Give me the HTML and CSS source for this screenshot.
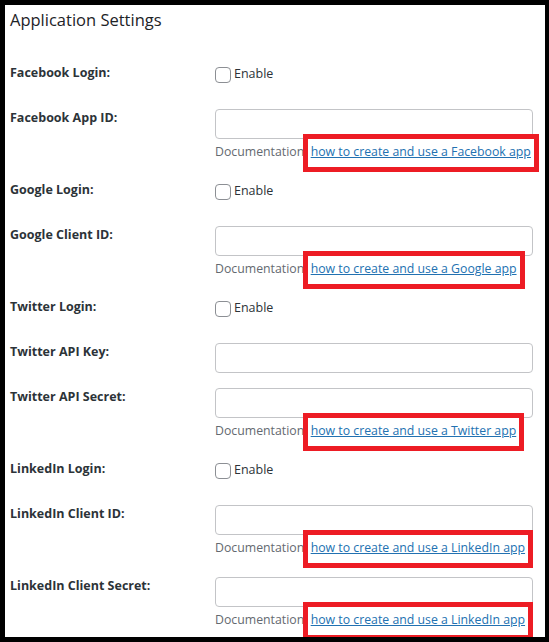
FILE: index.html
```html
<!DOCTYPE html>
<html lang="en">
<head>
    <meta charset="UTF-8">
    <meta name="viewport" content="width=device-width, initial-scale=1.0">
    <title>Application Settings</title>
    <link rel="stylesheet" href="styles.css">
</head>
<body>
    <div id="settings">
        <h2 class="pageTitle">Application Settings</h2>

        <div class="formRow">
            <label class="rowLabel">Facebook Login:</label>
            <div class="field">
                <label class="check"><input type="checkbox"> Enable</label>
            </div>
        </div>
        <div class="formRow">
            <label class="rowLabel">Facebook App ID:</label>
            <div class="field">
                <input type="text" class="textInput">
                <p class="doc">Documentation: <span class="marked"><a href="#">how to create and use a Facebook app</a></span></p>
            </div>
        </div>

        <div class="formRow">
            <label class="rowLabel">Google Login:</label>
            <div class="field">
                <label class="check"><input type="checkbox"> Enable</label>
            </div>
        </div>
        <div class="formRow">
            <label class="rowLabel">Google Client ID:</label>
            <div class="field">
                <input type="text" class="textInput">
                <p class="doc">Documentation: <span class="marked"><a href="#">how to create and use a Google app</a></span></p>
            </div>
        </div>

        <div class="formRow">
            <label class="rowLabel">Twitter Login:</label>
            <div class="field">
                <label class="check"><input type="checkbox"> Enable</label>
            </div>
        </div>
        <div class="formRow">
            <label class="rowLabel">Twitter API Key:</label>
            <div class="field">
                <input type="text" class="textInput">
            </div>
        </div>
        <div class="formRow">
            <label class="rowLabel">Twitter API Secret:</label>
            <div class="field">
                <input type="text" class="textInput">
                <p class="doc">Documentation: <span class="marked"><a href="#">how to create and use a Twitter app</a></span></p>
            </div>
        </div>

        <div class="formRow">
            <label class="rowLabel">LinkedIn Login:</label>
            <div class="field">
                <label class="check"><input type="checkbox"> Enable</label>
            </div>
        </div>
        <div class="formRow">
            <label class="rowLabel">LinkedIn Client ID:</label>
            <div class="field">
                <input type="text" class="textInput">
                <p class="doc">Documentation: <span class="marked"><a href="#">how to create and use a LinkedIn app</a></span></p>
            </div>
        </div>
        <div class="formRow">
            <label class="rowLabel">LinkedIn Client Secret:</label>
            <div class="field">
                <input type="text" class="textInput">
                <p class="doc">Documentation: <span class="marked"><a href="#">how to create and use a LinkedIn app</a></span></p>
            </div>
        </div>
    </div>
</body>
</html>
```

FILE: styles.css
```css
* {
    box-sizing: border-box;
}
body {
    margin:0;
    background-color:#000;
    font-family:"Open Sans", "Noto Sans", sans-serif;
    color:#1d2327;
}
#settings {
    height:642px;
    border:solid #000;
    border-width:5px 4px 5px 5px;
    padding:0 12px 0 5px;
    background-color:#fff;
    overflow:hidden;
}

.pageTitle {
    margin:3px 0 32px 0;
    font-size:16.5px;
    line-height:24px;
    font-weight:400;
}

.formRow {
    display:grid;
    grid-template-columns:205px 1fr;
    margin-bottom:15px;
}

.rowLabel {
    font-size:12.5px;
    line-height:18px;
    font-weight:700;
    color:#2c3338;
}

.check {
    display:flex;
    align-items:center;
    gap:3px;
    height:30px;
    padding-bottom:10px;
    font-size:12.5px;
    line-height:18px;
    color:#2c3338;
}
.check input {
    appearance:none;
    width:16px;
    height:16px;
    margin:2px 0 0 0;
    border:1px solid #8c8f94;
    border-radius:4px;
    background:#fff;
}

.textInput {
    display:block;
    width:100%;
    height:30px;
    margin:0;
    border:1px solid #c3c4c7;
    border-radius:4px;
    background:#fff;
}

.doc {
    margin:3px 0 4px 0;
    font-size:12.3px;
    line-height:20px;
    white-space:nowrap;
    color:#646970;
}
.doc a {
    color:#2271b1;
}

.marked {
    position:relative;
    display:inline-block;
}
.marked::after {
    content:"";
    position:absolute;
    top:-8px;
    bottom:-10px;
    left:-8px;
    right:-8px;
    border:5px solid #ed1c24;
}
```
